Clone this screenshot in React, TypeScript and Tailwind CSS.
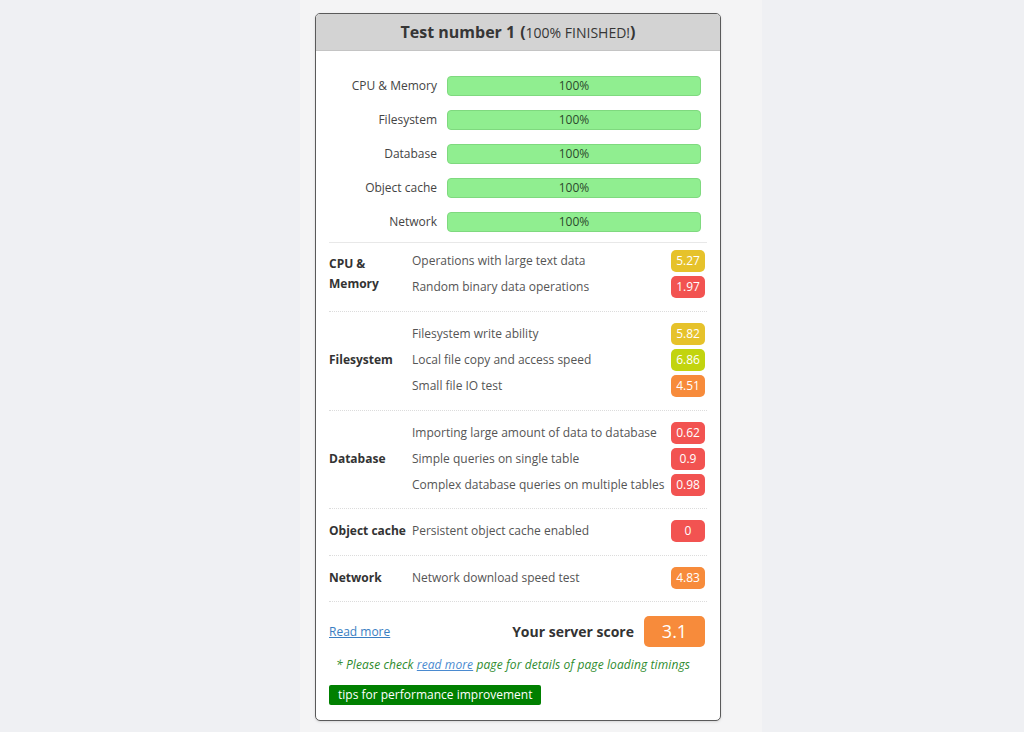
import React from "react";

const progress = ["CPU & Memory", "Filesystem", "Database", "Object cache", "Network"];

type Row = { name: string; score: string; color: string };
type Section = { title: React.ReactNode; pad: string; rows: Row[] };

const RED = "bg-[#f25351]";
const YELLOW = "bg-[#e6c22b]";
const LIME = "bg-[#c2d40f]";
const ORANGE = "bg-[#f78b3b]";

const sections: Section[] = [
  {
    title: (
      <>
        CPU &amp;
        <br />
        Memory
      </>
    ),
    pad: "pt-[5px] pb-[11px]",
    rows: [
      { name: "Operations with large text data", score: "5.27", color: YELLOW },
      { name: "Random binary data operations", score: "1.97", color: RED },
    ],
  },
  {
    title: "Filesystem",
    pad: "pt-[9px] pb-[11px]",
    rows: [
      { name: "Filesystem write ability", score: "5.82", color: YELLOW },
      { name: "Local file copy and access speed", score: "6.86", color: LIME },
      { name: "Small file IO test", score: "4.51", color: ORANGE },
    ],
  },
  {
    title: "Database",
    pad: "pt-[9px] pb-[10px]",
    rows: [
      { name: "Importing large amount of data to database", score: "0.62", color: RED },
      { name: "Simple queries on single table", score: "0.9", color: RED },
      { name: "Complex database queries on multiple tables", score: "0.98", color: RED },
    ],
  },
  {
    title: "Object cache",
    pad: "pt-[9px] pb-[11px]",
    rows: [{ name: "Persistent object cache enabled", score: "0", color: RED }],
  },
  {
    title: "Network",
    pad: "pt-[9px] pb-[10px]",
    rows: [{ name: "Network download speed test", score: "4.83", color: ORANGE }],
  },
];

export default function App() {
  return (
    <div
      className="min-h-[732px] bg-[#eff0f3] text-[#444]"
      style={{ fontFamily: '"Open Sans", "Noto Sans", sans-serif' }}
    >
      <div className="ml-[300px] w-[462px] min-h-[732px] bg-[#f4f4f5] pt-[13px]">
        {/* Card */}
        <div className="ml-[15px] w-[406px] rounded-[5px] border border-[#5a5a5a] bg-white overflow-hidden shadow-sm">
          {/* Header */}
          <div className="h-[37px] bg-[#d3d3d3] border-b border-[#c4c4c4] flex items-center justify-center text-[16px] font-bold text-[#363636]">
            <span>Test number 1</span>
            <span className="ml-[5px]">
              (<span className="font-normal text-[14px]">100% FINISHED!</span>)
            </span>
          </div>

          <div className="px-[13px]">
            {/* Progress bars */}
            <div className="pt-[25px] pb-[10px] flex flex-col gap-[14px]">
              {progress.map((p) => (
                <div key={p} className="flex items-center">
                  <div className="w-[108px] text-right text-[12px] text-[#444]">{p}</div>
                  <div className="ml-[10px] w-[254px] h-[20px] rounded-[4px] bg-[#90ee90] border border-[#7fd97f] flex items-center justify-center text-[12px] text-[#2c4a2c]">
                    100%
                  </div>
                </div>
              ))}
            </div>

            {/* Sections */}
            <div className="border-t border-[#e8e8e8]">
              {sections.map((s, i) => (
                <div key={i} className={`flex items-center border-b border-dotted border-[#dcdcdc] ${s.pad}`}>
                  <div className="w-[83px] text-[12px] font-bold text-[#333] leading-[20px]">{s.title}</div>
                  <div className="flex-1 flex flex-col pr-[2px]">
                    {s.rows.map((r) => (
                      <div key={r.name} className="h-[26px] flex items-center justify-between">
                        <span className="text-[12px] text-[#555] whitespace-nowrap">{r.name}</span>
                        <span
                          className={`${r.color} w-[34px] h-[22px] rounded-[5px] flex items-center justify-center text-[12px] text-white`}
                        >
                          {r.score}
                        </span>
                      </div>
                    ))}
                  </div>
                </div>
              ))}
            </div>

            {/* Score */}
            <div className="flex items-center justify-between pt-[14px] pr-[2px]">
              <a href="#" className="text-[12px] text-[#3a7ec2] underline">
                Read more
              </a>
              <div className="flex items-center">
                <span className="text-[14px] font-bold text-[#333] mr-[10px]">Your server score</span>
                <span className="w-[61px] h-[31px] rounded-[5px] bg-[#f78b3b] flex items-center justify-center text-[18px] text-white">
                  3.1
                </span>
              </div>
            </div>

            <p className="mt-[9px] ml-[7px] text-[12px] italic text-[#2e8b2e] tracking-[0.1px]">
              * Please check{" "}
              <a href="#" className="text-[#4a8ad0] underline">
                read more
              </a>{" "}
              page for details of page loading timings
            </p>

            <div className="pt-[7px] pb-[15px]">
              <button className="h-[20px] px-[9px] rounded-[2px] bg-[#008000] text-white text-[12px] leading-[20px]">
                tips for performance improvement
              </button>
            </div>
          </div>
        </div>
      </div>
    </div>
  );
}
